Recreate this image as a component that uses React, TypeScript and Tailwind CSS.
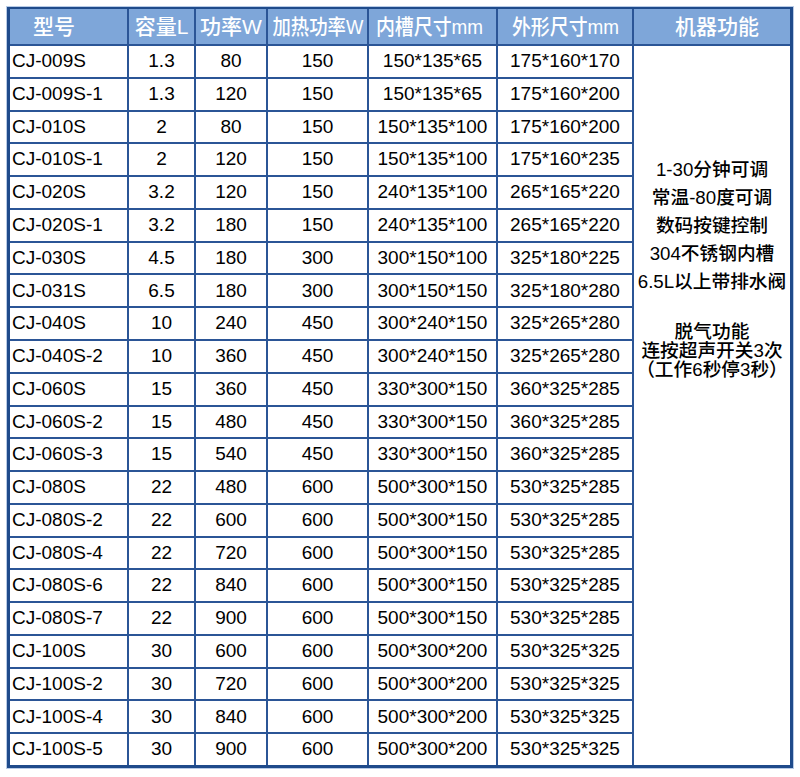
const rows: string[][] = [
  ['CJ-009S', '1.3', '80', '150', '150*135*65', '175*160*170'],
  ['CJ-009S-1', '1.3', '120', '150', '150*135*65', '175*160*200'],
  ['CJ-010S', '2', '80', '150', '150*135*100', '175*160*200'],
  ['CJ-010S-1', '2', '120', '150', '150*135*100', '175*160*235'],
  ['CJ-020S', '3.2', '120', '150', '240*135*100', '265*165*220'],
  ['CJ-020S-1', '3.2', '180', '150', '240*135*100', '265*165*220'],
  ['CJ-030S', '4.5', '180', '300', '300*150*100', '325*180*225'],
  ['CJ-031S', '6.5', '180', '300', '300*150*150', '325*180*280'],
  ['CJ-040S', '10', '240', '450', '300*240*150', '325*265*280'],
  ['CJ-040S-2', '10', '360', '450', '300*240*150', '325*265*280'],
  ['CJ-060S', '15', '360', '450', '330*300*150', '360*325*285'],
  ['CJ-060S-2', '15', '480', '450', '330*300*150', '360*325*285'],
  ['CJ-060S-3', '15', '540', '450', '330*300*150', '360*325*285'],
  ['CJ-080S', '22', '480', '600', '500*300*150', '530*325*285'],
  ['CJ-080S-2', '22', '600', '600', '500*300*150', '530*325*285'],
  ['CJ-080S-4', '22', '720', '600', '500*300*150', '530*325*285'],
  ['CJ-080S-6', '22', '840', '600', '500*300*150', '530*325*285'],
  ['CJ-080S-7', '22', '900', '600', '500*300*150', '530*325*285'],
  ['CJ-100S', '30', '600', '600', '500*300*200', '530*325*325'],
  ['CJ-100S-2', '30', '720', '600', '500*300*200', '530*325*325'],
  ['CJ-100S-4', '30', '840', '600', '500*300*200', '530*325*325'],
  ['CJ-100S-5', '30', '900', '600', '500*300*200', '530*325*325'],
];

const features = ['1-30分钟可调', '常温-80度可调', '数码按键控制', '304不锈钢内槽', '6.5L以上带排水阀'];
const degas = ['脱气功能', '连按超声开关3次', '（工作6秒停3秒）'];

const headCell = 'bg-[#7ea6d9] text-white text-[21px] font-medium flex items-center justify-center whitespace-nowrap';

export default function App() {
  return (
    <div
      className="bg-white w-[800px] h-[777px] pt-[7px] pl-[7px]"
      style={{ fontFamily: '"Liberation Sans", "Noto Sans CJK SC", sans-serif' }}
    >
      <div className="w-[786px] h-[761px] border-x-[3px] border-b-[3px] border-t-2 border-[#1f4b8b] bg-[#2b5596] shadow-[0_0_0_1px_#b8cbe6] grid grid-cols-[117px_65px_70px_99px_127px_134px_156px] grid-rows-[35px_repeat(22,minmax(0,1fr))] gap-[2px]">
        {/* header */}
        <div className={headCell + ' justify-start pl-[23px]'}>型号</div>
        <div className={headCell}>容量L</div>
        <div className={headCell}>功率W</div>
        <div className={headCell}>
          <span className="inline-block scale-x-[0.875]">加热功率W</span>
        </div>
        <div className={headCell}>
          <span className="inline-block scale-x-[0.9] -translate-x-[3px]">内槽尺寸mm</span>
        </div>
        <div className={headCell}>
          <span className="inline-block scale-x-[0.9]">外形尺寸mm</span>
        </div>
        <div className={headCell + ' pl-[10px]'}>机器功能</div>

        {rows.map((r, i) => (
          <div key={r[0]} className="contents">
            {r.map((cell, j) => (
              <div
                key={j}
                className={
                  'bg-white text-black text-[19px] flex items-center whitespace-nowrap ' +
                  (j === 0 ? 'justify-start pl-[2px]' : 'justify-center')
                }
              >
                {cell}
              </div>
            ))}
            {i === 0 && (
              <div className="bg-white row-span-22 flex flex-col items-center pt-[110px] text-black text-[18.7px] font-medium">
                {features.map((f) => (
                  <div key={f} className="leading-[28px] whitespace-nowrap">
                    {f}
                  </div>
                ))}
                <div className="mt-[26px]">
                  {degas.map((d) => (
                    <div key={d} className="leading-[19px] text-center whitespace-nowrap">
                      {d}
                    </div>
                  ))}
                </div>
              </div>
            )}
          </div>
        ))}
      </div>
    </div>
  );
}
